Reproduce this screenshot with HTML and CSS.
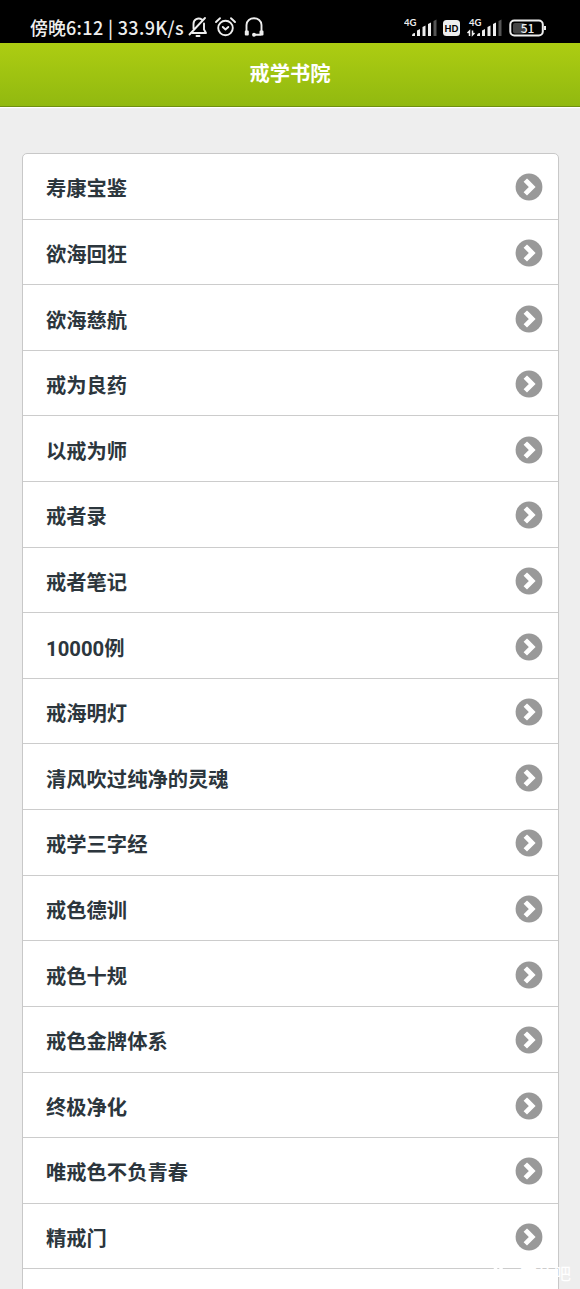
FILE: index.html
```html
<!DOCTYPE html>
<html lang="zh-CN">
<head>
<meta charset="utf-8">
<title>戒学书院</title>
<link rel="stylesheet" href="styles.css">
</head>
<body>
<svg class="defs" width="0" height="0">
  <symbol id="go" viewBox="0 0 28 28"><circle cx="14" cy="14" r="13.4" fill="#999"/><path d="M12 8.800 17.200 14 12 19.200" fill="none" stroke="#fff" stroke-width="4.800" stroke-linecap="square" stroke-linejoin="miter"/></symbol>
</svg>
<div class="status">
  <span class="clock">傍晚<span class="figures">6:12 | 33.9K/s</span></span>
  <svg class="modes" width="78" height="24" viewBox="0 0 78 24" fill="none" stroke="#eee" stroke-width="1.9" stroke-linecap="round" stroke-linejoin="round">
    <path d="M4.500 18H18l-2-3.500V8.500M14 4.600C10 2 5.500 4.500 5.500 9v4.500M1.500 19.500 17 3M8.500 21h3"/>
    <circle cx="37.500" cy="13" r="7.300"/><path d="M34.800 12l2.700 2.500 2.800-2.500M28 7l4-3.800M43 3.200 47 7"/>
    <path d="M58.500 18V10c0-9 15-9 15 0v8"/><path d="M57.800 16.500v3h2v-3zM72.500 16.500v3h2v-3zM67 19.700h6" stroke-width="2"/><circle cx="66" cy="19.700" r="1"/>
  </svg>
  <svg class="radio" width="144" height="26" viewBox="0 0 144 26">
    <g fill="#eee"><path d="M8 22c0-2 1-3 3-3v3zM13 16.500l3-1.500v7h-3zM18.500 13l3-1.500V22h-3zM24 10l3-1.500V22h-3z"/><path d="M29.500 7l3-1.500V22h-3z" fill="#555"/>
    <rect x="39" y="6" width="17" height="16" rx="3.500"/>
    <path d="M73 22c0-2 1-3 3-3v3zM78 16.500l3-1.500v7h-3zM83.500 13l3-1.500V22h-3zM89 10l3-1.500V22h-3z"/><path d="M94.500 7l3-1.500V22h-3z" fill="#555"/></g>
    <path d="M65.500 22v-5l-2 2M68.500 16.500V21l2-2" fill="none" stroke="#eee" stroke-width="1.500"/>
    <rect x="109" y="9" width="12" height="10.500" rx="2" fill="#444"/>
    <rect x="106.300" y="6.600" width="32.500" height="14.800" rx="4" fill="none" stroke="#eee" stroke-width="2"/>
    <path d="M141 12v4" stroke="#eee" stroke-width="2"/>
    <text class="net" x="0" y="11.500">4G</text><text class="net" x="65" y="11.500">4G</text>
    <text class="hd" x="47.500" y="17.500">HD</text><text class="pct" x="123.500" y="18.500">51</text>
  </svg>
</div>
<header class="bar"><h1>戒学书院</h1></header>
<main>
<ul class="list">
<li><span>寿康宝鉴</span><svg><use href="#go"/></svg></li>
<li><span>欲海回狂</span><svg><use href="#go"/></svg></li>
<li><span>欲海慈航</span><svg><use href="#go"/></svg></li>
<li><span>戒为良药</span><svg><use href="#go"/></svg></li>
<li><span>以戒为师</span><svg><use href="#go"/></svg></li>
<li><span>戒者录</span><svg><use href="#go"/></svg></li>
<li><span>戒者笔记</span><svg><use href="#go"/></svg></li>
<li><span>10000例</span><svg><use href="#go"/></svg></li>
<li><span>戒海明灯</span><svg><use href="#go"/></svg></li>
<li><span>清风吹过纯净的灵魂</span><svg><use href="#go"/></svg></li>
<li><span>戒学三字经</span><svg><use href="#go"/></svg></li>
<li><span>戒色德训</span><svg><use href="#go"/></svg></li>
<li><span>戒色十规</span><svg><use href="#go"/></svg></li>
<li><span>戒色金牌体系</span><svg><use href="#go"/></svg></li>
<li><span>终极净化</span><svg><use href="#go"/></svg></li>
<li><span>唯戒色不负青春</span><svg><use href="#go"/></svg></li>
<li><span>精戒门</span><svg><use href="#go"/></svg></li>
<li></li>
</ul>
</main>
<div class="watermark">
  <svg width="20" height="20" viewBox="0 0 20 20" fill="#fff"><ellipse cx="3" cy="9" rx="2" ry="3"/><ellipse cx="7.500" cy="4" rx="2" ry="3"/><ellipse cx="13" cy="4" rx="2" ry="3"/><ellipse cx="17" cy="9" rx="2" ry="3"/><path d="M10 8c3 0 8 6 6 9s-4 1-6 1-4 2-6-1 3-9 6-9z"/></svg>
  <span>戒色吧</span>
</div>
</body>
</html>
```
FILE: styles.css
```css
* { box-sizing: border-box; }
body {
  margin: 0;
  height: 1289px;
  overflow: hidden;
  position: relative;
  background: #eee;
  font-family: Roboto, "Noto Sans CJK SC", sans-serif;
}
.defs { position: absolute; }
.status {
  height: 43px;
  padding: 14px 32px 0 30px;
  background: #000;
  color: #eee;
  display: flex;
  align-items: flex-start;
}
.clock {
  width: 158px;
  margin-top: -1px;
  font: 500 18px/28px "Noto Sans CJK SC", sans-serif;
  white-space: nowrap;
}
.figures { letter-spacing: 0.35px; }
.modes { margin-top: 1px; }
.radio { margin-left: auto; }
.net { font: 700 9.500px Lato, sans-serif; fill: #eee; }
.hd { font: 900 9px Lato, sans-serif; fill: #000; text-anchor: middle; }
.pct { font: 500 12px "Noto Sans CJK SC", sans-serif; fill: #eee; text-anchor: middle; }
.bar {
  height: 64px;
  background: linear-gradient(#adcd12, #91b910);
  border-bottom: 1px solid #6f9010;
  box-shadow: 0 1px 1px #fff;
  display: flex;
  align-items: center;
  justify-content: center;
}
.bar h1 {
  margin: 0 0 1px;
  color: #fff;
  font-size: 20.300px;
  line-height: 30px;
  font-weight: 700;
}
main { padding: 46px 21.500px 0 22px; }
.list {
  margin: 0;
  padding: 0;
  list-style: none;
  background: #fff;
  border: 1px solid #c8c8c8;
  border-radius: 5px 5px 0 0;
}
.list li {
  height: 65.620px;
  padding: 6px 14.500px 0 23px;
  border-bottom: 1px solid #ccc;
  display: flex;
  align-items: center;
  justify-content: space-between;
  color: #2c363d;
  font-size: 20.300px;
  line-height: 30px;
  font-weight: 700;
}
.list svg { width: 28px; height: 28px; margin-top: -4px; }
.watermark {
  position: absolute;
  right: 9px;
  bottom: 4px;
  display: flex;
  align-items: center;
  gap: 12px;
  color: #fff;
  font: 17px/24px "Noto Sans CJK SC", sans-serif;
}
```
